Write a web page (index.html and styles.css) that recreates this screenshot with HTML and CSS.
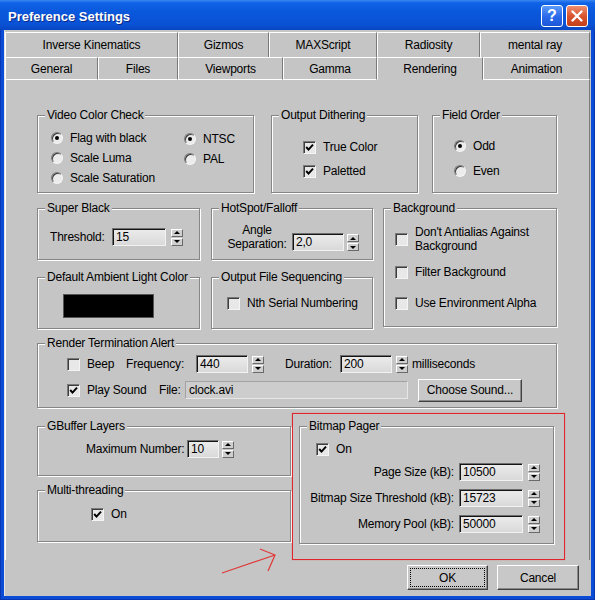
FILE: index.html
```html
<!DOCTYPE html>
<html lang="en">
<head>
  <meta charset="UTF-8">
  <title>Preference Settings</title>
  <link rel="stylesheet" href="styles.css">
</head>
<body>
<div class="window">
  <div class="titlebar">
    <span class="title">Preference Settings</span>
    <span class="cap help">?</span>
    <span class="cap close">
      <svg width="20" height="20" viewBox="0 0 20 20"><path d="M5.5 5.5 L14.5 14.5 M14.5 5.5 L5.5 14.5" stroke="#fff" stroke-width="2.4" stroke-linecap="round"/></svg>
    </span>
  </div>

  <div class="client">
    <div class="tabs">
      <div class="tabrow back">
        <div class="tab">Inverse Kinematics</div>
        <div class="tab">Gizmos</div>
        <div class="tab">MAXScript</div>
        <div class="tab">Radiosity</div>
        <div class="tab">mental ray</div>
      </div>
      <div class="tabrow front">
        <div class="tab">General</div>
        <div class="tab">Files</div>
        <div class="tab">Viewports</div>
        <div class="tab">Gamma</div>
        <div class="tab sel">Rendering</div>
        <div class="tab">Animation</div>
      </div>
    </div>

    <div class="page">
      <!-- video / dithering / field order -->
      <div class="row">
        <fieldset class="grp vcc">
          <legend>Video Color Check</legend>
          <div class="vcc-body">
            <div class="stack vcc-left">
              <div class="opt"><span class="radio on"></span>Flag with black</div>
              <div class="opt"><span class="radio"></span>Scale Luma</div>
              <div class="opt"><span class="radio"></span>Scale Saturation</div>
            </div>
            <div class="stack vcc-right">
              <div class="opt"><span class="radio on"></span>NTSC</div>
              <div class="opt"><span class="radio"></span>PAL</div>
            </div>
          </div>
        </fieldset>
        <fieldset class="grp od">
          <legend>Output Dithering</legend>
          <div class="stack od-body">
            <div class="opt"><span class="check"><svg width="11" height="11" viewBox="0 0 11 11"><path d="M2.2 5 L4.5 7.6 L9 2.6" fill="none" stroke="#000" stroke-width="2"/></svg></span>True Color</div>
            <div class="opt"><span class="check"><svg width="11" height="11" viewBox="0 0 11 11"><path d="M2.2 5 L4.5 7.6 L9 2.6" fill="none" stroke="#000" stroke-width="2"/></svg></span>Paletted</div>
          </div>
        </fieldset>
        <fieldset class="grp fo">
          <legend>Field Order</legend>
          <div class="stack fo-body">
            <div class="opt"><span class="radio on"></span>Odd</div>
            <div class="opt"><span class="radio"></span>Even</div>
          </div>
        </fieldset>
      </div>

      <!-- super black, hotspot, background -->
      <div class="row row-b">
        <div class="stack col-small">
          <fieldset class="grp small">
            <legend>Super Black</legend>
            <div class="inline sb-body">
              <span class="lbl w-threshold">Threshold:</span>
              <span class="field w-54">15</span>
              <span class="spin"><span class="up"></span><span class="dn"></span></span>
            </div>
          </fieldset>
          <fieldset class="grp small next">
            <legend>Default Ambient Light Color</legend>
            <div class="amb-body"><div class="swatch"></div></div>
          </fieldset>
        </div>
        <div class="stack col-small mid">
          <fieldset class="grp small">
            <legend>HotSpot/Falloff</legend>
            <div class="inline hs-body">
              <span class="sep-label">Angle<br>Separation:</span>
              <span class="field w-52">2,0</span>
              <span class="spin tight"><span class="up"></span><span class="dn"></span></span>
            </div>
          </fieldset>
          <fieldset class="grp small next">
            <legend>Output File Sequencing</legend>
            <div class="ofs-body">
              <div class="opt"><span class="check"></span>Nth Serial Numbering</div>
            </div>
          </fieldset>
        </div>
        <fieldset class="grp bg">
          <legend>Background</legend>
          <div class="stack bg-body">
            <div class="opt two"><span class="check"></span><span>Don't Antialias Against<br>Background</span></div>
            <div class="opt filter"><span class="check"></span>Filter Background</div>
            <div class="opt envalpha"><span class="check"></span>Use Environment Alpha</div>
          </div>
        </fieldset>
      </div>

      <!-- render termination alert -->
      <div class="row row-c">
        <fieldset class="grp rta">
          <legend>Render Termination Alert</legend>
          <div class="rta-body">
            <div class="inline rta-row">
              <div class="opt w-beep"><span class="check"></span>Beep</div>
              <span class="lbl w-freq">Frequency:</span>
              <span class="field w-52">440</span>
              <span class="spin"><span class="up"></span><span class="dn"></span></span>
              <span class="lbl w-dur">Duration:</span>
              <span class="field w-52">200</span>
              <span class="spin"><span class="up"></span><span class="dn"></span></span>
              <span class="lbl ms">milliseconds</span>
            </div>
            <div class="inline rta-row second">
              <div class="opt w-play"><span class="check"><svg width="11" height="11" viewBox="0 0 11 11"><path d="M2.2 5 L4.5 7.6 L9 2.6" fill="none" stroke="#000" stroke-width="2"/></svg></span>Play Sound</div>
              <span class="lbl w-file">File:</span>
              <span class="path">clock.avi</span>
              <span class="btn choose">Choose Sound...</span>
            </div>
          </div>
        </fieldset>
      </div>

      <!-- gbuffer, threading, bitmap pager -->
      <div class="row row-d">
        <div class="stack col-wide">
          <fieldset class="grp gb">
            <legend>GBuffer Layers</legend>
            <div class="inline gb-body">
              <span class="lbl w-max">Maximum Number:</span>
              <span class="field w-32">10</span>
              <span class="spin tight"><span class="up"></span><span class="dn"></span></span>
            </div>
          </fieldset>
          <fieldset class="grp mt">
            <legend>Multi-threading</legend>
            <div class="mt-body">
              <div class="opt"><span class="check"><svg width="11" height="11" viewBox="0 0 11 11"><path d="M2.2 5 L4.5 7.6 L9 2.6" fill="none" stroke="#000" stroke-width="2"/></svg></span>On</div>
            </div>
          </fieldset>
        </div>
        <div class="callout">
          <fieldset class="grp bp">
            <legend>Bitmap Pager</legend>
            <div class="bp-body">
              <div class="opt bp-on"><span class="check"><svg width="11" height="11" viewBox="0 0 11 11"><path d="M2.2 5 L4.5 7.6 L9 2.6" fill="none" stroke="#000" stroke-width="2"/></svg></span>On</div>
              <div class="bp-grid">
                <span class="lbl">Page Size (kB):</span>
                <span class="field">10500</span>
                <span class="spin"><span class="up"></span><span class="dn"></span></span>
                <span class="lbl">Bitmap Size Threshold (kB):</span>
                <span class="field">15723</span>
                <span class="spin"><span class="up"></span><span class="dn"></span></span>
                <span class="lbl">Memory Pool (kB):</span>
                <span class="field">50000</span>
                <span class="spin"><span class="up"></span><span class="dn"></span></span>
              </div>
            </div>
          </fieldset>
        </div>
      </div>
    </div>

    <div class="btnbar">
      <span class="btn ok">OK</span>
      <span class="btn cancel">Cancel</span>
    </div>
  </div>

  <svg class="arrow" width="595" height="600">
    <path d="M222 573 L275 555 M260 549 L275 555 L268 571" fill="none" stroke="#e03838" stroke-width="1.2"/>
  </svg>
</div>
</body>
</html>
```

FILE: styles.css
```css
* { box-sizing:border-box; }
body { margin:0; font-family:"Liberation Sans", Arial, sans-serif; font-size:12px; letter-spacing:-0.2px; color:#000; background:#fff; }

.window { position:relative; width:595px; height:600px; padding:0 4px 4px; background:#0a4cd6; box-shadow:inset 1px 0 0 #0837b0, inset -1px -1px 0 #0837b0; }

/* caption */
.titlebar { display:flex; align-items:flex-start; gap:3px; height:30px; margin:0 -4px; padding:5px 7px 0 8px;
  background:linear-gradient(#3a86f2 0, #0f62e6 3px, #0a58dc 40%, #0a52d6 80%, #0846c2 100%); }
.title { flex:1; color:#fff; font-weight:bold; font-size:13px; letter-spacing:0; line-height:22px; padding-top:1px; text-shadow:1px 1px 0 #0b2a86; }
.cap { width:22px; height:22px; border:1px solid #fff; border-radius:3px; display:flex; align-items:center; justify-content:center; flex:none; }
.help { background:linear-gradient(#5c9bf9, #2a68ea 55%, #1c56d8); color:#fff; font-weight:bold; font-size:16px; letter-spacing:0; }
.close { background:linear-gradient(#ee8f70, #d9552f 50%, #c23f1b); }

.client { height:566px; background:#c5c5c5; padding:2px 0 0 1px; box-shadow:inset 1px 0 0 #e4e4e4; }

/* tab strip */
.tabs { width:585px; }
.tabrow { display:grid; }
.tabrow.back { grid-template-columns:173px 91px 108px 103px 1fr; height:25px; }
.tabrow.front { grid-template-columns:93px 80px 105px 94px 106px 1fr; height:23px; }
.tab { display:flex; align-items:center; justify-content:center; border-top:1px solid #fff; border-left:1px solid #fff; border-right:1px solid #7a7a7a; white-space:nowrap; }
.tabrow.front .tab { border-bottom:1px solid #fff; }
.tabrow.front .tab.sel { border-bottom-color:#c5c5c5; }

.page { width:585px; border-left:1px solid #fff; border-right:1px solid #7a7a7a; padding:28px 0 0 31px; }

.row { display:flex; align-items:flex-start; }
.row-b { margin-top:8px; }
.row-c { margin-top:7px; }
.row-d { margin-top:5px; }
.stack { display:flex; flex-direction:column; }
.inline { display:flex; align-items:center; }

/* etched group boxes */
.grp { margin:0; padding:0; min-width:0; border:1px solid #868686; box-shadow:inset 1px 1px 0 #fff, 1px 1px 0 #fff; }
.grp legend { margin-left:7px; padding:0 2px; line-height:14px; background:#c5c5c5; white-space:nowrap; }

.vcc { width:217px; height:85px; }
.od { width:147px; height:85px; margin-left:17px; }
.fo { width:125px; height:85px; margin-left:14px; }

.col-small { width:163px; }
.col-small.mid { width:162px; margin-left:11px; }
.small { height:59px; }
.small.next { margin-top:10px; }
.bg { width:174px; height:126px; margin-left:10px; }
.rta { width:520px; height:72px; }

.col-wide { width:254px; margin-top:6px; }
.gb { height:57px; }
.mt { height:59px; margin-top:7px; }
.callout { margin-left:1px; border:1px solid #e0262c; box-shadow:0 0 1px rgba(224,38,44,.5); padding:5px 10px 15px 6px; }
.bp { width:255px; height:125px; }

/* controls */
.opt { display:flex; align-items:center; gap:7px; height:20px; white-space:nowrap; }
.lbl { white-space:nowrap; }
.radio { width:12px; height:12px; flex:none; border-radius:50%; background:#ececec; border:1px solid; border-color:#7a7a7a #f4f4f4 #f4f4f4 #7a7a7a; box-shadow:inset 1px 1px 0 #3c3c3c; display:flex; align-items:center; justify-content:center; }
.radio.on::after { content:""; width:4px; height:4px; border-radius:50%; background:#000; }
.check { width:13px; height:13px; flex:none; background:#e8e8e8; border:1px solid; border-color:#7a7a7a #f4f4f4 #f4f4f4 #7a7a7a; box-shadow:inset 1px 1px 0 #3c3c3c; }
.check svg { display:block; }

.field { height:18px; flex:none; padding:0 3px; line-height:16px; background:linear-gradient(#ececec, #d9d9d9); border:1px solid; border-color:#6e6e6e #f2f2f2 #f2f2f2 #6e6e6e; box-shadow:inset 1px 1px 0 #141414; }
.w-54 { width:54px; }
.w-52 { width:52px; }
.w-32 { width:32px; }

.spin { display:flex; flex-direction:column; width:12px; height:17px; flex:none; margin-left:5px; gap:1px; }
.spin.tight { margin-left:3px; }
.spin span { flex:1; display:flex; align-items:center; justify-content:center; background:#cfcfcf; border:1px solid; border-color:#fff #6a6a6a #6a6a6a #fff; }
.spin span::after { content:""; border-left:3px solid transparent; border-right:3px solid transparent; }
.spin .up::after { border-bottom:3px solid #000; }
.spin .dn::after { border-top:3px solid #000; }

.btn { display:flex; align-items:center; justify-content:center; height:25px; background:#c8c8c8; border:1px solid; border-color:#fff #404040 #404040 #fff; box-shadow:inset -1px -1px 0 #8a8a8a; white-space:nowrap; }

/* group contents */
.vcc-body { display:flex; padding:6px 0 0 13px; }
.vcc-left { width:133px; }
.vcc-right { margin-top:1px; }
.od-body { padding:15px 0 0 31px; gap:4px; }
.fo-body { padding:14px 0 0 21px; gap:5px; }

.sb-body { padding:13px 0 0 12px; }
.w-threshold { width:62px; }
.amb-body { padding:10px 0 0 25px; }
.swatch { width:91px; height:24px; background:#000; border:1px solid #555; }
.hs-body { align-items:flex-end; padding:8px 0 0 15px; }
.sep-label { width:60px; margin-right:5px; text-align:center; line-height:14px; }
.ofs-body { padding:9px 0 0 15px; }

.bg-body { padding:10px 0 0 11px; }
.opt.two { height:28px; line-height:14px; }
.opt.filter { margin-top:9px; }
.opt.envalpha { margin-top:11px; }

.rta-body { padding:4px 0 0 29px; }
.rta-row { height:20px; }
.rta-row.second { height:24px; margin-top:4px; }
.rta .spin { margin-left:4px; }
.w-beep { width:59px; }
.w-freq { width:70px; }
.w-dur { width:55px; margin-left:21px; }
.ms { margin-left:4px; }
.w-play { width:92px; }
.w-file { width:26px; }
.path { width:223px; height:18px; padding:0 3px; line-height:17px; background:#cdcdcd; border:1px solid; border-color:#a2a2a2 #e6e6e6 #e6e6e6 #a2a2a2; }
.choose { width:104px; height:23px; margin-left:10px; }

.gb-body { padding:7px 0 0 48px; }
.w-max { width:101px; }
.mt-body { padding:7px 0 0 53px; }

.bp-body { padding:6px 13px 9px 11px; }
.bp-on { margin-left:5px; }
.bp-grid { display:grid; grid-template-columns:minmax(0,1fr) 64px 12px; column-gap:5px; row-gap:8px; align-items:center; margin-top:4px; }
.bp-grid .lbl { justify-self:end; }
.bp-grid .field { height:18px; }
.bp-grid .spin { margin-left:0; }

/* dialog buttons */
.btnbar { display:flex; justify-content:flex-end; gap:9px; margin-top:5px; padding-right:12px; }
.ok { width:81px; outline:1px dotted #000; outline-offset:-4px; }
.cancel { width:82px; }

.arrow { position:absolute; left:0; top:0; pointer-events:none; }
```
